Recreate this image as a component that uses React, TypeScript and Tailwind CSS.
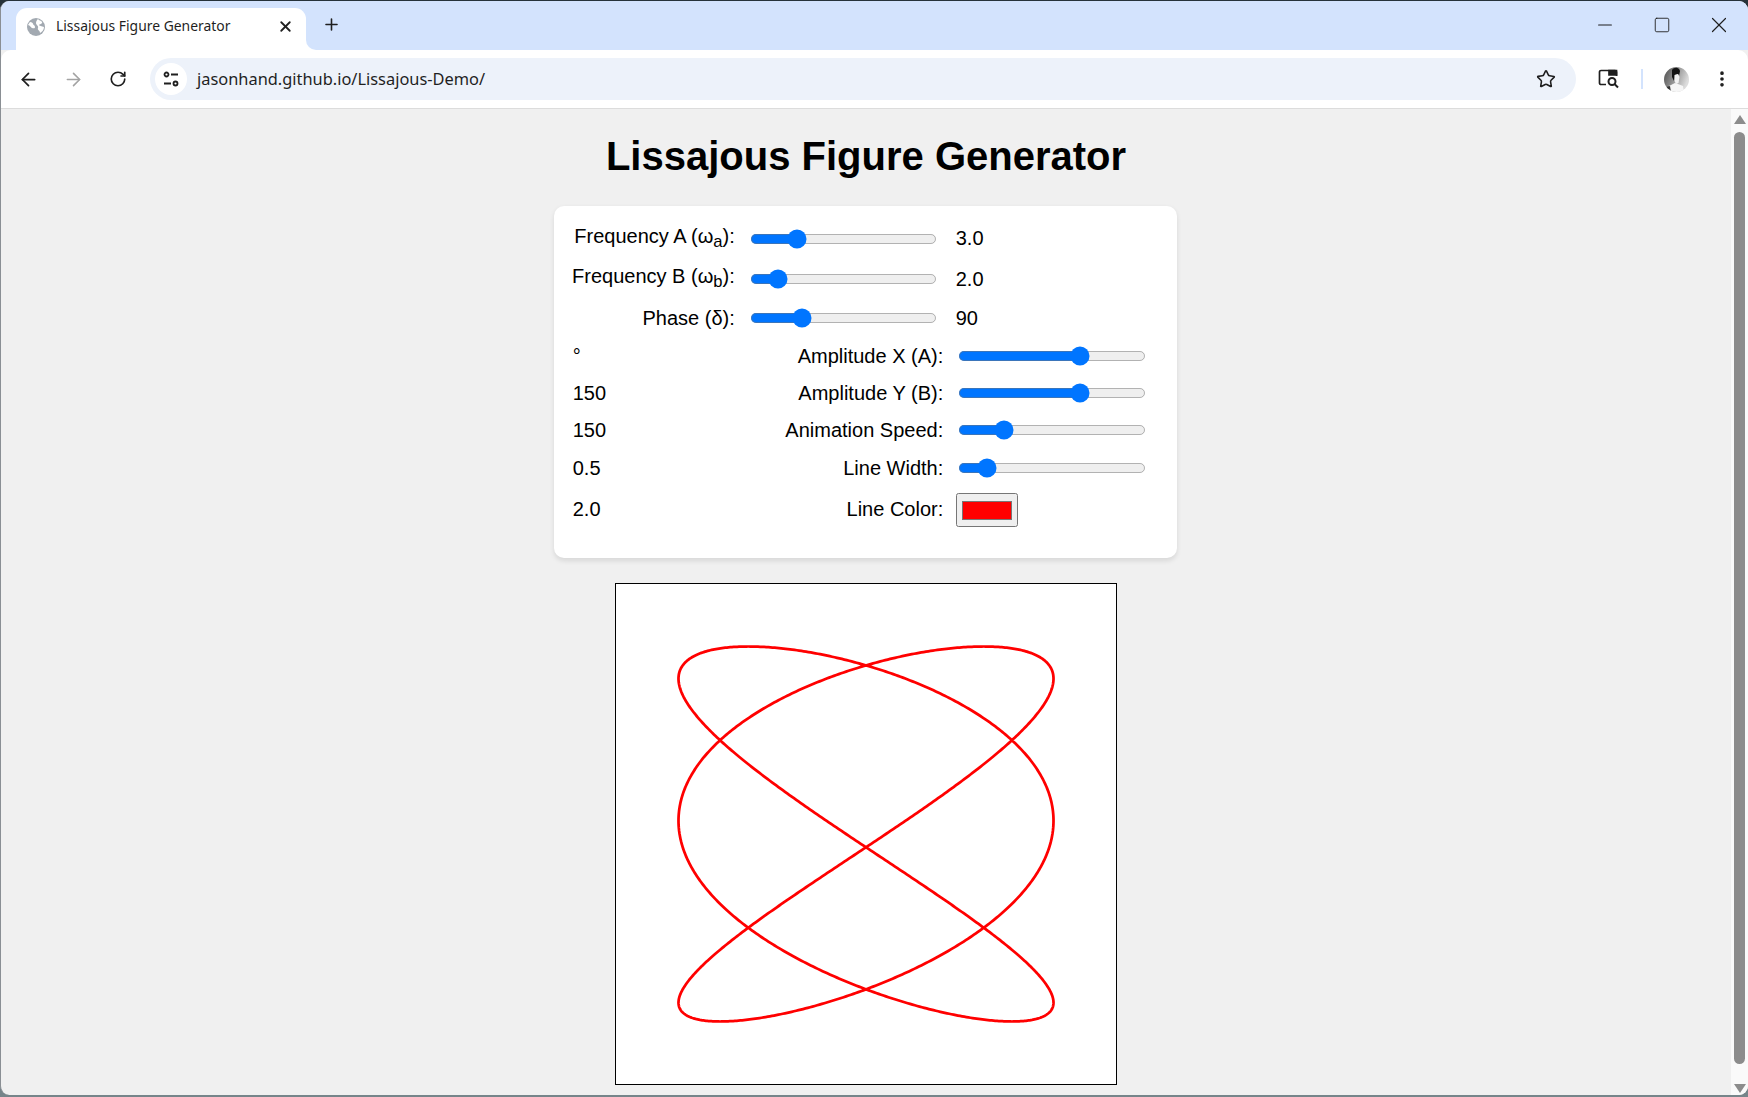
import { ArrowLeft, ArrowRight, Minus, MoreVertical, Plus, RotateCw, Square, Star, X } from "lucide-react";

// x = A sin(3t + d), y = B sin(2t), frozen at the frame in the picture
function lissajousPath() {
    const pts: string[] = [];
    const d = (96.1 * Math.PI) / 180;
    for (let i = 0; i <= 1440; i++) {
        const t = (i / 1440) * Math.PI * 2;
        const x = 250 + 187.5 * Math.sin(3 * t + d);
        const y = 250 + 187.5 * Math.sin(2 * t);
        pts.push(`${i === 0 ? "M" : "L"}${x.toFixed(2)} ${y.toFixed(2)}`);
    }
    return pts.join(" ") + " Z";
}

function Slider({ min, max, step, value }: { min: number; max: number; step: number; value: number }) {
    return (
        <input
            type="range"
            min={min}
            max={max}
            step={step}
            defaultValue={value}
            className="m-[2px] h-4 w-[150px] [zoom:1.25]"
        />
    );
}

function Label({ children, className = "" }: { children: React.ReactNode; className?: string }) {
    return <label className={`justify-self-end whitespace-nowrap text-right ${className}`}>{children}</label>;
}

function TabSearchIcon() {
    return (
        <svg width="22" height="20" viewBox="0 0 22 20" fill="none" stroke="#1f1f1f" strokeWidth="1.7">
            <path d="M8 15.5H3a1.5 1.5 0 0 1-1.5-1.5V3A1.5 1.5 0 0 1 3 1.5h14A1.5 1.5 0 0 1 18.500 3v4" />
            <path d="M11 1.500h7.500V6H11z" fill="#1f1f1f" />
            <circle cx="14" cy="12.500" r="3.500" strokeWidth="2" />
            <path d="M16.500 15l3.500 3.500" strokeWidth="2" />
        </svg>
    );
}

function Avatar() {
    return (
        <svg width="25" height="25" viewBox="0 0 25 25">
            <defs>
                <linearGradient id="av" x1="0" y1="0" x2="1" y2="0.400">
                    <stop offset="0" stopColor="#4a4a4a" />
                    <stop offset="1" stopColor="#dcdcdc" />
                </linearGradient>
                <clipPath id="avc">
                    <circle cx="12.500" cy="12.500" r="12.500" />
                </clipPath>
            </defs>
            <g clipPath="url(#avc)">
                <rect width="25" height="25" fill="url(#av)" />
                <path d="M8 3c2-3 7-3 8 1l-1 5-1-2-3 1-1 6-2-4z" fill="#141414" />
                <path d="M10.500 8l3.500-1 1.500 3-1 6-2.500 1-1.500-3z" fill="#f2f2f2" />
                <path d="M4 25l1-6 6-3 3 1 5 2 1 6z" fill="#f6f6f6" />
                <path d="M2 20l4-1 1 6H2z" fill="#333" />
            </g>
        </svg>
    );
}

export default function App() {
    return (
        <div className="h-screen w-screen overflow-hidden bg-linear-to-b from-[#26323a] to-[#76858a] pb-[2px] pt-px font-['Liberation_Sans',Arial,sans-serif] text-[20px] text-black">
            <div className="flex h-full flex-col overflow-hidden rounded-[9px] border-l border-[#8a8f94] bg-[#f0f0f0]">
                {/* tab strip */}
                <div className="flex h-[49px] shrink-0 items-end bg-[#d3e3fd] pl-[15px]">
                    <div className="relative flex h-[42px] w-[290px] items-center rounded-t-[11px] bg-white pb-[5px] pl-[11px] pr-[11px] font-['Noto_Sans',sans-serif] text-[13.900px] text-[#1f1f1f]">
                        <svg width="18" height="18" viewBox="0 0 18 18" className="shrink-0">
                            <circle cx="9" cy="9" r="9" fill="#a2a9b1" />
                            <path d="M3 4c2 0 3 1 3 2s2 1 2 3-2 1-3 1-2-3-4-3zM11 1c1 2 3 1 4 3s-3 2-3 3 3 1 5 2c0 3-2 5-4 6 0-3-3-3-2-5s-2-3-2-5 1-3 2-4z" fill="#ffffff" />
                        </svg>
                        <span className="ml-[11px] flex-1 whitespace-nowrap">Lissajous Figure Generator</span>
                        <X size={17} strokeWidth={2.6} className="mr-px text-[#1f1f1f]" />
                        <div className="absolute bottom-0 right-[-10px] h-[10px] w-[10px] bg-white">
                            <div className="h-full w-full rounded-bl-[10px] bg-[#d3e3fd]" />
                        </div>
                    </div>
                    <div className="mb-[8px] ml-[11px] flex h-[36px] w-[28px] items-center justify-center">
                        <Plus size={19} strokeWidth={2} className="text-[#1f1f1f]" />
                    </div>
                    <div className="mb-[7px] ml-auto flex h-[36px] items-center pr-[16px] text-[#1f1f1f]">
                        <Minus size={22} strokeWidth={1.1} />
                        <Square size={18} strokeWidth={1.2} className="ml-[37px]" />
                        <X size={26} strokeWidth={1.1} className="ml-[35px]" />
                    </div>
                </div>

                {/* toolbar */}
                <div className="flex h-[59px] shrink-0 items-center rounded-t-[10px] border-b border-[#dcdcdc] bg-white pl-[17px] text-[#1f1f1f]">
                    <ArrowLeft size={21} strokeWidth={2} />
                    <ArrowRight size={21} strokeWidth={1.8} className="ml-[24px] text-[#a3a3a3]" />
                    <RotateCw size={18} strokeWidth={2.2} className="ml-[25px]" />
                    <div className="ml-[23px] flex h-[42px] w-[1426px] items-center rounded-full bg-[#edf2fa] pl-[5px] pr-[20px]">
                        <div className="flex h-[32px] w-[32px] items-center justify-center rounded-full bg-white">
                            <svg width="18" height="18" viewBox="0 0 18 18" fill="none" stroke="#1f1f1f" strokeWidth="1.800">
                                <circle cx="4.500" cy="4.500" r="2" />
                                <path d="M9 4.500h7M2 13.500h7" />
                                <circle cx="13.500" cy="13.500" r="2" />
                            </svg>
                        </div>
                        <span className="ml-[10px] flex-1 whitespace-nowrap font-['Noto_Sans',sans-serif] text-[16.400px]">
                            jasonhand.github.io/Lissajous-Demo/
                        </span>
                        <Star size={20} strokeWidth={1.9} />
                    </div>
                    <div className="ml-[22px]">
                        <TabSearchIcon />
                    </div>
                    <div className="ml-[21px] h-[20px] w-[2px] bg-[#d3e3fd]" />
                    <div className="ml-[21px]">
                        <Avatar />
                    </div>
                    <MoreVertical size={20} strokeWidth={2.4} className="ml-[23px]" />
                </div>

                {/* page */}
                <div className="flex min-h-0 flex-1">
                    <main className="flex min-w-0 flex-1 flex-col items-center pt-[24px]">
                        <h1 className="mb-[27px] text-[40px] font-bold leading-[46px]">Lissajous Figure Generator</h1>

                        <div className="mb-[25px] mr-px grid h-[352px] w-[623px] shrink-0 grid-cols-[162px_196px_202px] grid-rows-[27.500px_28px_26px_24px_25px_25px_25px_35px] items-center gap-x-[12.500px] gap-y-[12.500px] rounded-[10px] bg-white px-[18.750px] pt-[18.750px] shadow-[0_2.500px_5px_rgba(0,0,0,0.1)]">
                            <Label className="pb-[6px]">
                                Frequency A (ω<sub className="text-[16.600px]">a</sub>):
                            </Label>
                            <Slider min={1} max={10} step={0.1} value={3} />
                            <span className="pb-[2px]">3.0</span>

                            <Label className="pb-[6px]">
                                Frequency B (ω<sub className="text-[16.600px]">b</sub>):
                            </Label>
                            <Slider min={1} max={10} step={0.1} value={2} />
                            <span>2.0</span>

                            <Label>Phase (δ):</Label>
                            <Slider min={0} max={360} step={1} value={90} />
                            <span>90</span>

                            <span>°</span>
                            <Label>Amplitude X (A):</Label>
                            <Slider min={50} max={200} step={1} value={150} />

                            <span>150</span>
                            <Label>Amplitude Y (B):</Label>
                            <Slider min={50} max={200} step={1} value={150} />

                            <span>150</span>
                            <Label>Animation Speed:</Label>
                            <Slider min={0.1} max={2} step={0.1} value={0.5} />

                            <span>0.5</span>
                            <Label>Line Width:</Label>
                            <Slider min={1} max={10} step={0.5} value={2} />

                            <span className="pb-[2px]">2.0</span>
                            <Label className="pb-[2px]">Line Color:</Label>
                            <input
                                type="color"
                                defaultValue="#ff0000"
                                className="h-[27px] w-[50px] rounded-[2px] border border-[#767676] bg-[#efefef] px-[2px] py-px [zoom:1.25]"
                            />
                        </div>

                        <div className="h-[502px] w-[502px] shrink-0 border border-black bg-white">
                            <svg width="500" height="500" viewBox="0 0 500 500" fill="none">
                                <path d={lissajousPath()} stroke="#ff0000" strokeWidth="2.750" />
                            </svg>
                        </div>
                    </main>

                    {/* scrollbar */}
                    <div className="flex w-[17px] shrink-0 flex-col items-center bg-[#fafafa] pb-[2px] pt-[6px]">
                        <div className="h-0 w-0 border-x-[6px] border-b-[9px] border-x-transparent border-b-[#8c8c8c]" />
                        <div className="mt-[8px] w-[11px] flex-1 rounded-full bg-[#8c8c8c]" />
                        <div className="mt-[20px] h-0 w-0 border-x-[6px] border-t-[9px] border-x-transparent border-t-[#8c8c8c]" />
                    </div>
                </div>
            </div>
        </div>
    );
}
